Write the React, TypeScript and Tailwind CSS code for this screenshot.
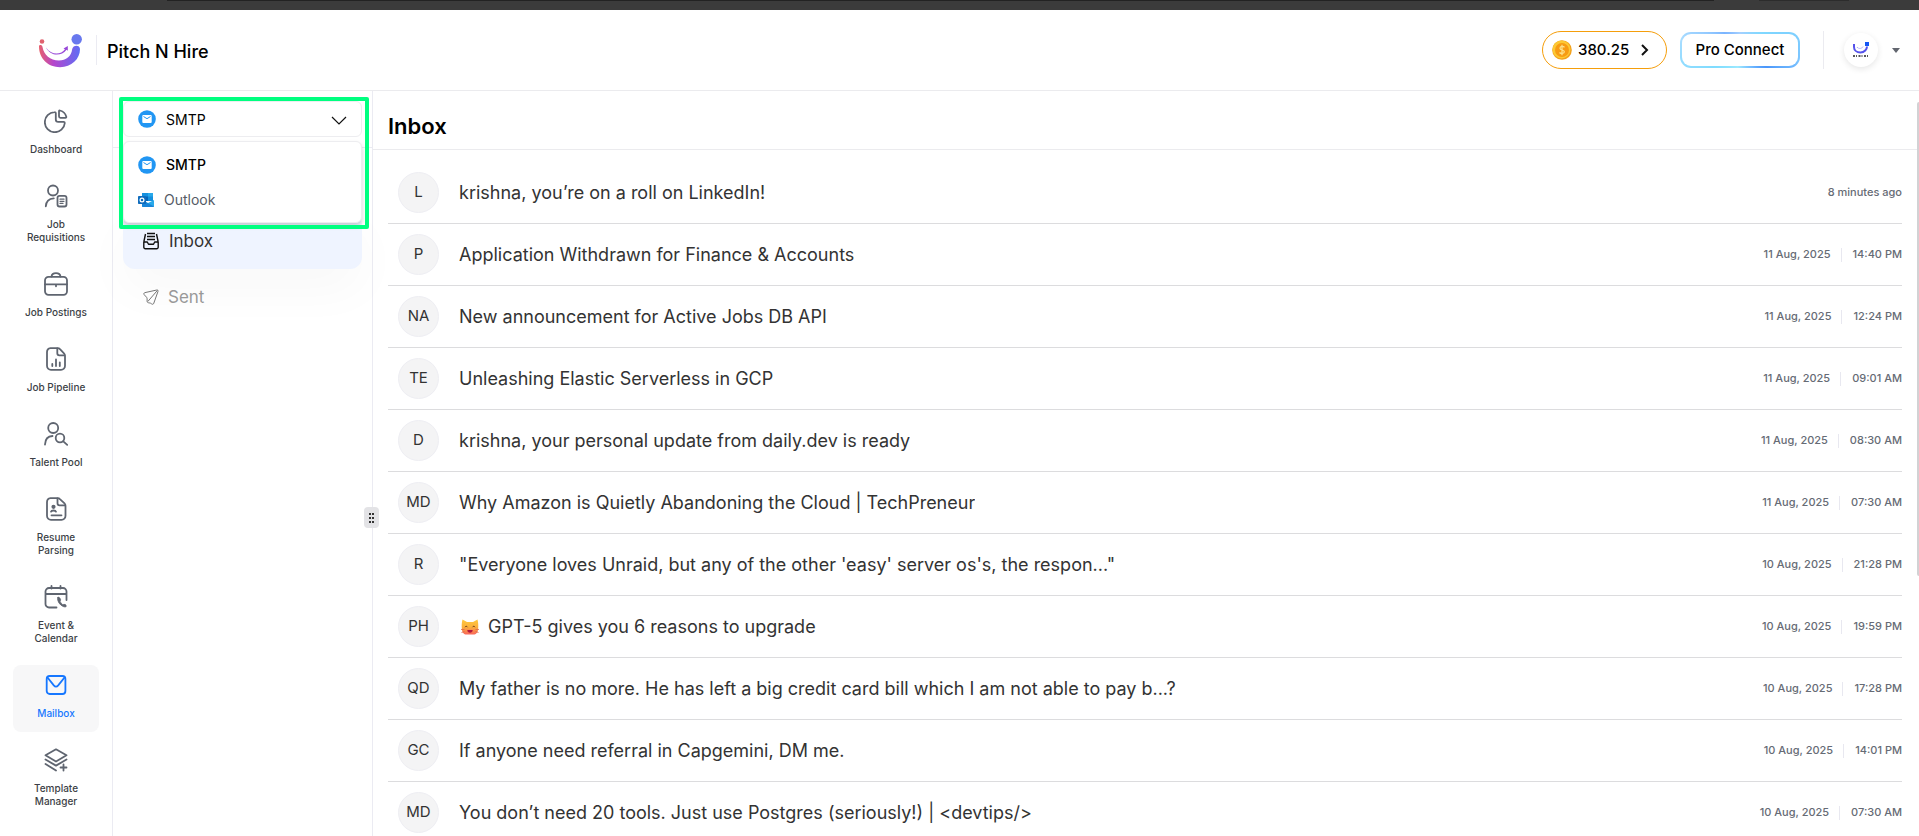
import { useState } from "react";
import type { ReactNode } from "react";

type Mail = { initials: string; subject: string; date?: string; time: string; cat?: boolean };

const mails: Mail[] = [
    { initials: "L", subject: "krishna, you’re on a roll on LinkedIn!", time: "8 minutes ago" },
    { initials: "P", subject: "Application Withdrawn for Finance & Accounts", date: "11 Aug, 2025", time: "14:40 PM" },
    { initials: "NA", subject: "New announcement for Active Jobs DB API", date: "11 Aug, 2025", time: "12:24 PM" },
    { initials: "TE", subject: "Unleashing Elastic Serverless in GCP", date: "11 Aug, 2025", time: "09:01 AM" },
    { initials: "D", subject: "krishna, your personal update from daily.dev is ready", date: "11 Aug, 2025", time: "08:30 AM" },
    { initials: "MD", subject: "Why Amazon is Quietly Abandoning the Cloud | TechPreneur", date: "11 Aug, 2025", time: "07:30 AM" },
    { initials: "R", subject: "\"Everyone loves Unraid, but any of the other 'easy' server os's, the respon...\"", date: "10 Aug, 2025", time: "21:28 PM" },
    { initials: "PH", subject: "GPT-5 gives you 6 reasons to upgrade", date: "10 Aug, 2025", time: "19:59 PM", cat: true },
    { initials: "QD", subject: "My father is no more. He has left a big credit card bill which I am not able to pay b...?", date: "10 Aug, 2025", time: "17:28 PM" },
    { initials: "GC", subject: "If anyone need referral in Capgemini, DM me.", date: "10 Aug, 2025", time: "14:01 PM" },
    { initials: "MD", subject: "You don’t need 20 tools. Just use Postgres (seriously!) | <devtips/>", date: "10 Aug, 2025", time: "07:30 AM" },
];

function Icon({ children }: { children: ReactNode }) {
    return (
        <svg viewBox="0 0 24 24" className="size-6" fill="none" stroke="currentColor" strokeWidth="1.8" strokeLinecap="round" strokeLinejoin="round" aria-hidden="true">
            {children}
        </svg>
    );
}

const navItems = [
    {
        label: "Dashboard",
        icon: (
            <Icon>
                <path d="M10.500 3.200A10 10 0 1 0 20.800 14c0-.8-.5-1.200-1.200-1.200h-5.400a2.400 2.400 0 0 1-2.400-2.400V4.300c0-.7-.5-1.200-1.300-1.100Z" />
                <path d="M15 2.300c0-.7.5-1 1.100-.8a8.800 8.800 0 0 1 6.200 6.200c.2.700-.2 1.100-.8 1.100h-5A1.500 1.500 0 0 1 15 7.300Z" />
            </Icon>
        ),
    },
    {
        label: "Job Requisitions",
        icon: (
            <Icon>
                <circle cx="9" cy="6.500" r="5" />
                <path d="M1.800 22.300c.3-5 3.200-7.800 8-8" />
                <rect x="13.500" y="11.800" width="9" height="10.700" rx="2" />
                <path d="M16 15.200h4M16 17.300h4M16 19.400h3" strokeWidth="1.200" />
            </Icon>
        ),
    },
    {
        label: "Job Postings",
        icon: (
            <Icon>
                <rect x="1" y="4.800" width="22" height="18" rx="3.500" />
                <path d="M7.500 4.600C7.800 2.200 9 1.200 12 1.200s4.200 1 4.500 3.400M1 12.300h22M12 12.300v2" />
            </Icon>
        ),
    },
    {
        label: "Job Pipeline",
        icon: (
            <Icon>
                <path d="M6.500 1.200h7.200c1 0 1.800.4 2.500 1.100l3.800 4c.7.700 1 1.500 1 2.500v10a4 4 0 0 1-4 4H7a4 4 0 0 1-4-4V5.200a4 4 0 0 1 3.500-4Z" />
                <path d="M13.300 1.500v4.800c0 1.200.8 2 2 2h5M8.300 17v2M12 12.500V19M15.800 15.300V19" />
            </Icon>
        ),
    },
    {
        label: "Talent Pool",
        icon: (
            <Icon>
                <circle cx="9.200" cy="6" r="5" />
                <path d="M1 22.500c.2-5 3-8.300 7.500-8.500" />
                <circle cx="16" cy="16" r="4.300" />
                <path d="m19.300 19.300 3.900 3.500" />
            </Icon>
        ),
    },
    {
        label: "Resume Parsing",
        icon: (
            <Icon>
                <path d="M6.500 1.200h7.200c1 0 1.800.4 2.500 1.100l4.300 4c.7.700 1 1.500 1 2.500v10a4 4 0 0 1-4 4H7a4 4 0 0 1-4-4V5.200a4 4 0 0 1 3.500-4Z" />
                <path d="M13.500 1.500v4.800c0 1.200.8 2 2 2h5.500M7.500 18.300h10M7 14.700c.4-1.600 4.600-1.600 5 0" />
                <circle cx="9.500" cy="9.800" r="1.200" fill="currentColor" />
            </Icon>
        ),
    },
    {
        label: "Event & Calendar",
        icon: (
            <Icon>
                <path d="M12.500 22.500H5A3.500 3.500 0 0 1 1.500 19V6.500A3.500 3.500 0 0 1 5 3h14a3.500 3.500 0 0 1 3.500 3.500v8.500M1.500 9h21M7.500 1v2.500M16.500 1v2.500" />
                <path d="M13.800 12.500c-1.300 3.800 3.300 9.500 7.700 9.500.8 0 1-2-.2-2.500-1.200-.4-1.800 0-2.500.2-1.200-.8-2.200-2-2.700-3.200.4-.8.800-1.500.3-2.500-.6-1.200-2.100-2.600-2.600-1.500Z" fill="currentColor" strokeWidth=".8" />
            </Icon>
        ),
    },
    {
        label: "Mailbox",
        active: true,
        icon: (
            <Icon>
                <rect x="2.700" y="3" width="18.700" height="18" rx="3" />
                <path d="m3.500 4.500 6.300 7.900c1.400 1.600 3 1.600 4.400 0l6.300-7.900" />
            </Icon>
        ),
    },
    {
        label: "Template Manager",
        icon: (
            <Icon>
                <path d="M12 1.300 22.500 7.300 12 13.500 1.500 7.300ZM1.500 11.500 12 17.600l10.500-6.100M1.500 16 12 22.500M19.500 16.500v6M16.500 19.500h6" />
            </Icon>
        ),
    },
];

function Logo({ className }: { className: string }) {
    return (
        <svg viewBox="38 34 46 35" className={className} role="img" aria-label="Pitch N Hire">
            <defs>
                <linearGradient id="smile" x1="0" x2="1" y1="0" y2="0">
                    <stop offset="0" stopColor="#e8606c" />
                    <stop offset=".35" stopColor="#b545cc" />
                    <stop offset="1" stopColor="#5f6df5" />
                </linearGradient>
            </defs>
            <circle cx="42" cy="42.500" r="2.300" fill="#e0626f" />
            <circle cx="76.700" cy="40.300" r="5.200" fill="#6878ee" />
            <path d="M39 47.500C39 60 48.500 68.200 60 68.200S80 60 80 50c0-4.500-7-4.500-7.800 0C71.300 57.500 66 61.500 59 61.500c-9 0-15-5.500-16.500-13.500-.5-2.500-3.500-2.500-3.500-.5Z" fill="url(#smile)" />
            <path d="M46 48.500c4 8.500 15 9.500 20.500 2.200l1.300 1V47l-4.300 2.500 1.500.7c-4 6-14 6-19-1.700Z" fill="#9847d8" />
        </svg>
    );
}

function Avatar() {
    return (
        <svg viewBox="0 0 18 18" className="size-[18px]" aria-hidden="true">
            <path d="M2 3v3c0 3 2.500 5.500 6.500 5.500S15 8 15 5.500" fill="none" stroke="#5552ea" strokeWidth="2" />
            <path d="M5 6c1 2 5 2 6-.5" fill="none" stroke="#8f8af5" strokeDasharray="1 1" />
            <rect x="13" y="1" width="4" height="4" fill="#1457f5" />
            <path d="M1 15h16" stroke="#222" strokeWidth="1.500" strokeDasharray="2 1 1 1.500" />
        </svg>
    );
}

function SmtpIcon() {
    return (
        <svg viewBox="0 0 18 18" className="size-[18px]" aria-hidden="true">
            <circle cx="9" cy="9" r="8.800" fill="#2196f3" />
            <rect x="4.300" y="5" width="9.400" height="8" rx="1" fill="#fff" />
            <path d="m5.500 6.500 3.500 2.200 3.500-2.200" fill="none" stroke="#2196f3" strokeWidth="1" />
        </svg>
    );
}

function OutlookIcon() {
    return (
        <svg viewBox="0 0 16 16" className="size-4" aria-hidden="true">
            <path d="M4 1h11v8H4z" fill="#1490df" />
            <path d="M10 1h5v3.500h-5z" fill="#28a8ea" />
            <path d="M4 4.500h6V9H4z" fill="#0364b8" />
            <path d="M4 8l6 3 6-3v6a1 1 0 0 1-1 1H5a1 1 0 0 1-1-1Z" fill="#28a8ea" />
            <path d="M4 8l12 6.500a1 1 0 0 1-1 .5H5a1 1 0 0 1-1-1Z" fill="#1784d8" />
            <rect y="4" width="8" height="8" rx=".8" fill="#0f6cbd" />
            <circle cx="4" cy="8" r="1.900" fill="none" stroke="#fff" strokeWidth="1.200" />
        </svg>
    );
}

function Coin() {
    return (
        <svg viewBox="0 0 20 20" className="size-5" aria-hidden="true">
            <circle cx="10" cy="10" r="9.800" fill="#f2a01d" />
            <circle cx="9.500" cy="9.500" r="9" fill="#fcc934" />
            <circle cx="10" cy="10" r="7" fill="#f79b13" />
            <path d="M12.500 7.300C11.500 6 8 6 8 8.200c0 2.300 4.300 1.300 4.300 3.600 0 2-3.500 2.200-4.800.7M10 4.800v10.400" fill="none" stroke="#fde08a" strokeWidth="1.300" />
        </svg>
    );
}

function Cat() {
    return (
        <svg viewBox="0 0 18 16" className="ml-[2px] mr-[9px] h-4 w-[18px] shrink-0" role="img" aria-label="Grinning cat">
            <defs>
                <linearGradient id="cat" x1="0" x2="0" y1="0" y2="1">
                    <stop offset="0" stopColor="#ffc83d" />
                    <stop offset=".5" stopColor="#fbb13c" />
                    <stop offset="1" stopColor="#f9655b" />
                </linearGradient>
            </defs>
            <path d="M1.500.5 6 3h6L16.500.5c.8 3 .9 6 .7 9-.2 4-2.200 6-4.700 6h-7c-2.500 0-4.500-2-4.700-6-.2-3-.1-6 .7-9Z" fill="url(#cat)" />
            <path d="M4 8.200c.5-1.200 2-1.200 2.500 0M11.500 8.200c.5-1.200 2-1.200 2.500 0" fill="none" stroke="#6b3a1e" strokeWidth="1" />
            <path d="M6.300 11h5.400c0 1.800-1.200 2.700-2.700 2.700S6.300 12.800 6.300 11Z" fill="#b3173e" />
            <path d="M0 10.500h3.500M.5 13.500l3-1M14.500 10.500H18M14.500 12.500l3 1" stroke="#d9694a" strokeWidth=".8" />
        </svg>
    );
}

function Header() {
    return (
        <header className="flex h-[81px] shrink-0 items-center border-b border-[#ebebee] pl-[38px] pr-[19px]">
            <Logo className="h-[35px] w-[46px]" />
            <div className="ml-3 h-[30px] border-l border-[#ebebf2]" />
            <span className="ml-[10px] pt-[2px] text-[18px] font-medium text-black">Pitch N Hire</span>
            <div className="ml-auto flex items-center">
                <button className="flex h-[38px] w-[125px] items-center rounded-full border border-[#f59e0b] pl-[9px] text-[15px] font-medium text-black">
                    <Coin />
                    <span className="ml-[6px]">380.25</span>
                    <svg viewBox="0 0 10 12" className="ml-auto mr-4 h-3 w-[10px]" fill="none" stroke="#111" strokeWidth="2" aria-hidden="true">
                        <path d="m2 1 5 5-5 5" />
                    </svg>
                </button>
                <button className="ml-[13px] h-9 w-[120px] rounded-[11px] bg-[conic-gradient(from_0deg,#a5d0ff,#7fd8ff_15%,#7cc4ff_28%,#4a95fa_34%,#6fb8ff_40%,#9eeaff_52%,#7fdcff_66%,#a8dcff_78%,#7ab4ff_88%,#a5d0ff)] p-[2px]">
                    <span className="flex h-full items-center justify-center rounded-[9px] bg-white text-[15px] font-medium text-black">Pro Connect</span>
                </button>
                <div className="ml-[23px] h-[38px] border-l border-[#ebebf0]" />
                <button className="ml-5 flex items-center" aria-label="Account menu">
                    <span className="flex size-[34px] items-center justify-center rounded-full bg-white shadow-[0_2px_6px_rgba(0,0,0,0.1)]">
                        <Avatar />
                    </span>
                    <svg viewBox="0 0 8 5" className="ml-[14px] h-[5px] w-2" fill="#62666f" aria-hidden="true">
                        <path d="M0 0h8L4 5Z" />
                    </svg>
                </button>
            </div>
        </header>
    );
}

function SideNav() {
    return (
        <nav className="flex w-[113px] shrink-0 flex-col gap-2 border-r border-[#ebebf2] px-[13px] pt-[10px]">
            {navItems.map((item) => (
                <a
                    key={item.label}
                    href="#"
                    className={
                        item.active
                            ? "flex flex-col items-center gap-[10px] rounded-lg bg-[#f7f7f8] px-2 pb-3 pt-2 text-[#1677ff]"
                            : "flex flex-col items-center gap-[10px] rounded-lg px-2 pb-3 pt-2 text-[#5f6570]"
                    }
                >
                    {item.icon}
                    <span className={item.active ? "text-center text-[10px] font-medium leading-[13px]" : "text-center text-[10px] font-medium leading-[13px] text-[#3c3f46]"}>
                        {item.label}
                    </span>
                </a>
            ))}
        </nav>
    );
}

function AccountSelect() {
    const [open, setOpen] = useState(true);
    const [account, setAccount] = useState("SMTP");

    return (
        <div className="relative">
            <button
                onClick={() => setOpen(!open)}
                aria-haspopup="listbox"
                aria-expanded={open}
                className="flex h-9 w-full items-center rounded-md border border-[#ededf0] pl-[14px] pr-[14px] text-[14px] text-black"
            >
                {account === "SMTP" ? <SmtpIcon /> : <OutlookIcon />}
                <span className="ml-[10px]">{account}</span>
                <svg viewBox="0 0 16 10" className="ml-auto mt-1 h-[10px] w-4" fill="none" stroke="#111" strokeWidth="1.200" aria-hidden="true">
                    <path d="m1 1 7 7 7-7" />
                </svg>
            </button>
            {open && (
                <div role="listbox" aria-label="Mail account" className="absolute left-0 right-0 top-10 z-10 rounded-md border border-[#ededf0] bg-white pb-[5px] pt-[5px] shadow-[0_3px_5px_rgba(0,0,0,0.18)]">
                    <button role="option" aria-selected={account === "SMTP"} onClick={() => setAccount("SMTP")} className="flex h-[35px] w-full items-center pl-[14px] text-[14px] font-medium text-black">
                        <SmtpIcon />
                        <span className="ml-[10px]">SMTP</span>
                    </button>
                    <button role="option" aria-selected={account === "Outlook"} onClick={() => setAccount("Outlook")} className="flex h-[35px] w-full items-center pl-[14px] text-[14px] text-[#555b66]">
                        <OutlookIcon />
                        <span className="ml-[10px]">Outlook</span>
                    </button>
                </div>
            )}
            <div className="pointer-events-none absolute -left-1 -right-[7px] -top-1 z-20 h-[132px] rounded-[2px] border-4 border-[#00ff80]" />
        </div>
    );
}

function FolderPanel() {
    return (
        <aside className="relative w-[260px] shrink-0 border-r border-[#ebebf2]">
            <div className="h-[57px] border-b border-[#ebebf2] px-[10px] pt-[10px]">
                <AccountSelect />
            </div>
            <div className="px-[10px] pt-[65px]">
                <a href="#" className="flex h-14 items-center rounded-xl bg-[#eff4ff] pl-5 text-[17px] text-[#333] shadow-[0_20px_50px_rgba(0,0,0,0.03)]">
                    <svg viewBox="0 0 16 18" className="mr-[10px] h-[18px] w-4" fill="none" stroke="#111" strokeWidth="1.400" strokeLinejoin="round" aria-hidden="true">
                        <path d="M.8 10h3.500l1.200 2.300h5L11.700 10h3.500v5.300a1.500 1.500 0 0 1-1.500 1.500H2.300a1.500 1.500 0 0 1-1.500-1.500ZM.8 10 2.500 2M15.200 10 13.500 2M4 1.500h8M4 4.500h8M4 7.500h8" />
                    </svg>
                    <span className="pt-[2px]">Inbox</span>
                </a>
                <a href="#" className="flex h-14 items-center rounded-xl pl-5 text-[17px] text-[#999]">
                    <svg viewBox="0 0 16 16" className="mr-[9px] size-4" fill="none" stroke="#777" strokeWidth="1" strokeLinejoin="round" aria-hidden="true">
                        <path d="M13.800 1 2 3.600C.8 3.900.5 4.900 1.200 5.700l2.400 2.600c.4.500.5.900.5 1.500v2.400c0 1 .6 1.500 1.500 1.600l1.300.200c.6.100.9.300 1.400.7 1 .9 2.100.8 2.500-.5L15 2.400c.3-1-.2-1.600-1.200-1.400ZM4.800 12.500 14.500 1.300" />
                    </svg>
                    <span className="pt-[2px]">Sent</span>
                </a>
            </div>
            {/* drag handle sits on the panel border */}
            <button aria-label="Resize panel" className="absolute -right-[7px] top-[416px] z-10 flex h-[21px] w-[15px] items-center justify-center rounded-[4px] bg-[#e3e3e6]">
                <span className="grid grid-cols-2 gap-x-[1px] gap-y-[2px]">
                    {[0, 1, 2, 3, 4, 5].map((dot) => (
                        <span key={dot} className="size-[2px] bg-[#333]" />
                    ))}
                </span>
            </button>
        </aside>
    );
}

function MailRow({ mail }: { mail: Mail }) {
    return (
        <li className="flex items-center border-b border-[#dcdcde] py-[10px] pl-[10px]">
            <span className="flex size-[41px] shrink-0 items-center justify-center rounded-full border border-[#eeeef3] bg-[#f4f4f5] text-[15px] text-[#333]">
                {mail.initials}
            </span>
            <a href="#" className="ml-5 flex min-w-0 items-center text-[18px] text-[#333]">
                {mail.cat && <Cat />}
                <span className="truncate">{mail.subject}</span>
            </a>
            <div className="ml-auto flex shrink-0 items-center text-[11px] font-medium text-[#666b75]">
                {mail.date && (
                    <>
                        <span>{mail.date}</span>
                        <span className="ml-[10px] mr-[11px] h-[14px] border-l border-[#e8e8f0]" />
                    </>
                )}
                <time>{mail.time}</time>
            </div>
        </li>
    );
}

export default function App() {
    return (
        <div className="flex h-screen flex-col overflow-hidden bg-white font-['Inter',sans-serif]">
            <div className="flex h-[10px] shrink-0 bg-[#3b3b3b] pl-[167px] pr-[70px]">
                <div className="h-px flex-1 bg-[#222]" />
                <div className="ml-[45px] h-px w-[90px] bg-[#2c2c2c]" />
            </div>
            <Header />
            <div className="flex min-h-0 flex-1">
                <SideNav />
                <FolderPanel />
                <main className="flex min-w-0 flex-1 overflow-hidden">
                    <div className="min-w-0 flex-1">
                        <div className="flex h-[59px] items-center border-b border-[#ebebee] pl-[15px] pt-3">
                            <h1 className="text-[22px] font-semibold text-black">Inbox</h1>
                        </div>
                        <ul className="px-[15px] pt-3">
                            {mails.map((mail) => (
                                <MailRow key={mail.subject} mail={mail} />
                            ))}
                        </ul>
                    </div>
                    <div className="mt-[11px] h-[474px] w-[2px] shrink-0 rounded-l-sm bg-[#d2d2d4]" />
                </main>
            </div>
        </div>
    );
}
